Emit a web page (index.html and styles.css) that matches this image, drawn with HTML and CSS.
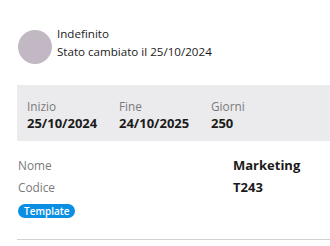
FILE: index.html
```html
<!DOCTYPE html>
<html lang="it">
<head>
    <meta charset="UTF-8">
    <meta name="viewport" content="width=device-width, initial-scale=1.0">
    <title>Contratto</title>
    <link rel="stylesheet" href="styles.css">
</head>
<body>
    <div class="panel">
        <div class="status">
            <div class="avatar"></div>
            <div class="status-text">
                <div class="status-name">Indefinito</div>
                <div class="status-date">Stato cambiato il 25/10/2024</div>
            </div>
        </div>

        <div class="period">
            <div class="period-item">
                <div class="period-label">Inizio</div>
                <div class="period-value">25/10/2024</div>
            </div>
            <div class="period-item">
                <div class="period-label">Fine</div>
                <div class="period-value">24/10/2025</div>
            </div>
            <div class="period-item">
                <div class="period-label">Giorni</div>
                <div class="period-value">250</div>
            </div>
        </div>

        <div class="details">
            <div class="detail-row">
                <span class="detail-label">Nome</span>
                <span class="detail-value">Marketing</span>
            </div>
            <div class="detail-row">
                <span class="detail-label">Codice</span>
                <span class="detail-value">T243</span>
            </div>
            <span class="badge">Template</span>
        </div>
    </div>
</body>
</html>
```

FILE: styles.css
```css
body {
    margin: 0;
    padding: 0;
    font-family: "Open Sans", "Noto Sans", sans-serif;
    background-color: #fff;
    color: #1b1b1b;
    overflow: hidden;
}

.panel {
    padding-left: 17px;
}

/* Status header */
.status {
    display: flex;
    align-items: flex-start;
    gap: 5px;
    padding-top: 25px;
    padding-left: 1px;
}

.avatar {
    width: 34px;
    height: 34px;
    border-radius: 50%;
    background-color: #c1b8c3;
    flex-shrink: 0;
    margin-top: 5px;
}

.status-text {
    font-size: 11.6px;
    line-height: 18px;
}

/* Period band */
.period {
    display: flex;
    background-color: #ebebed;
    margin-top: 21px;
    padding: 13px 10px 9px;
}

.period-item {
    width: 92px;
}

.period-label {
    font-size: 11.8px;
    color: #7a7a7a;
    line-height: 16px;
}

.period-value {
    font-size: 13px;
    font-weight: 700;
    line-height: 18px;
}

/* Details */
.details {
    padding: 13px 0 19px 1px;
    border-bottom: 1px solid #d2d2d2;
}

.detail-row {
    display: flex;
    line-height: 22px;
}

.detail-label {
    width: 215px;
    font-size: 11.8px;
    color: #7a7a7a;
}

.detail-value {
    font-size: 13px;
    font-weight: 700;
}

.badge {
    display: inline-block;
    margin-top: 6px;
    background-color: #0b8fe3;
    color: #fff;
    font-size: 10px;
    font-weight: 600;
    line-height: 14px;
    padding: 0 6px;
    border-radius: 7px;
}
```
